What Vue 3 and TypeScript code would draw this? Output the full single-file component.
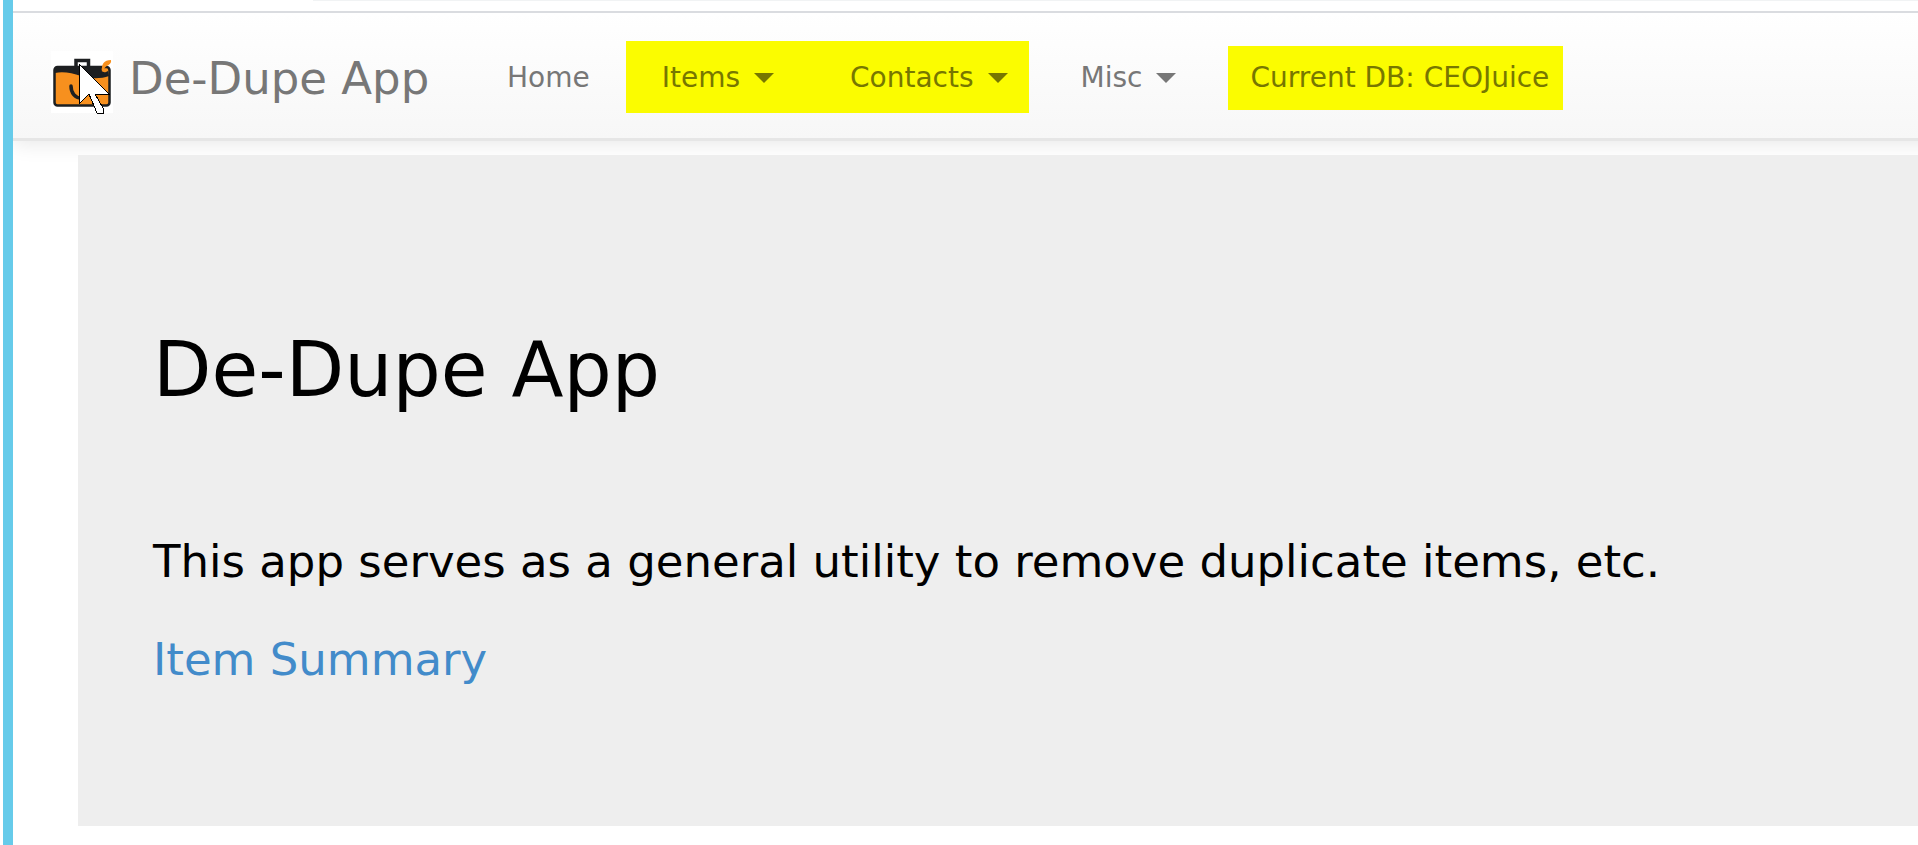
<script setup lang="ts">
interface MenuEntry {
  label: string
}

const recordMenus: MenuEntry[] = [{ label: 'Items' }, { label: 'Contacts' }]
</script>

<template>
  <div class="window">
    <div class="toolbar-edge"><div class="toolbar-field"></div></div>
    <header class="navbar">
      <a class="brand" href="#">
        <span class="logo">
          <svg class="case" viewBox="0 0 62 62" aria-hidden="true">
            <rect width="62" height="62" fill="#fff" />
            <path d="M25 16V9.500H37.500V16" fill="none" stroke="#1d1f21" stroke-width="3.500" />
            <rect x="3.500" y="16" width="55" height="38.500" rx="3" fill="#f7901e" stroke="#1d1f21" stroke-width="2.500" />
            <path d="M4 16H51C50 20 52 23 57 20L58 25C50 28 39 28 30 25C21 22 12 20 4 22Z" fill="#1d1f21" />
            <path d="M51 21C50 13 53 9 60 9C61 14 55 14 53 18Z" fill="#f7901e" />
            <path d="M20 35C20 42 24 47 30 47" fill="none" stroke="#1d1f21" stroke-width="3.500" stroke-linecap="round" />
          </svg>
          <svg class="pointer" viewBox="0 0 32 51" aria-hidden="true">
            <path d="M1 1V41L11 31L19 50H25V45L17 31H31Z" fill="#fff" stroke="#000" stroke-width="1" shape-rendering="crispEdges" />
          </svg>
        </span>
        <span class="brand-name">De-Dupe App</span>
      </a>
      <nav class="menu" aria-label="Main">
        <a class="home" href="#">Home</a>
        <div class="marked records">
          <button v-for="entry in recordMenus" :key="entry.label" type="button">
            {{ entry.label }}<span class="caret"></span>
          </button>
        </div>
        <button class="misc" type="button">Misc<span class="caret"></span></button>
        <a class="marked database" href="#">Current DB: CEOJuice</a>
      </nav>
    </header>
    <main class="jumbotron">
      <h1>De-Dupe App</h1>
      <p>This app serves as a general utility to remove duplicate items, etc.</p>
      <p><a href="#">Item Summary</a></p>
    </main>
  </div>
</template>

<style>
body {
  background: #fff;
}
</style>

<style scoped>
.window {
  box-sizing: border-box;
  min-height: 100vh;
  margin-left: 3px;
  border-left: 10px solid #66cbea;
  background: #fff;
  color: #000;
  font-family: Verdana, "DejaVu Sans", sans-serif;
  overflow: hidden;
}
.toolbar-edge {
  position: relative;
  z-index: 1;
  height: 11px;
  border-bottom: 2px solid #dadce0;
  background: #fff;
}
.toolbar-field {
  height: 1px;
  margin-left: 300px;
  background: #f1f3f4;
}
.navbar {
  display: flex;
  height: 125px;
  margin-right: -20px;
  padding-left: 38px;
  border-bottom: 3px solid #e6e6e6;
  background: linear-gradient(#fff, #f7f7f7);
  box-shadow: 0 2px 20px rgba(0, 0, 0, 0.1);
}
.navbar a,
.navbar button {
  color: #777;
  text-decoration: none;
  white-space: nowrap;
}
.brand {
  display: flex;
  width: 427px;
  padding-top: 38px;
}
.logo {
  position: relative;
  width: 62px;
  height: 62px;
}
.case {
  display: block;
  width: 62px;
  height: 62px;
}
.pointer {
  position: absolute;
  left: 27px;
  top: 12px;
  width: 32px;
  height: 51px;
}
.brand-name {
  margin-left: 16px;
  font-size: 45px;
  line-height: 56px;
}
.menu {
  display: flex;
  align-items: flex-start;
  padding-top: 28px;
  font-size: 28px;
  line-height: 74px;
}
.menu button {
  display: flex;
  align-items: center;
  padding: 0;
  border: 0;
  background: none;
  font: inherit;
}
.home {
  padding: 0 36px 0 29px;
}
.caret {
  margin-left: 14px;
  border: 10px solid transparent;
  border-top-color: currentColor;
  border-bottom: 0;
}
.menu .marked,
.menu .marked button {
  color: #777700;
}
.marked {
  background: #fbfc00;
}
.records {
  display: flex;
  gap: 76px;
  padding: 2px 21px 0 36px;
  line-height: 70px;
}
.menu .misc {
  margin: 0 52px;
}
.database {
  margin-top: 5px;
  padding: 0 14px 0 22px;
  line-height: 64px;
}
.jumbotron {
  margin: 14px 0 18px 65px;
  padding: 163px 75px 134px;
  background: #eee;
}
h1 {
  margin: 0 0 108px;
  font-size: 76px;
  font-weight: 400;
  line-height: 104px;
}
p {
  margin: 0 0 34px;
  font-size: 45px;
  line-height: 64px;
}
p:last-child {
  margin: 0;
}
p a {
  color: #428bca;
  text-decoration: none;
}
</style>
